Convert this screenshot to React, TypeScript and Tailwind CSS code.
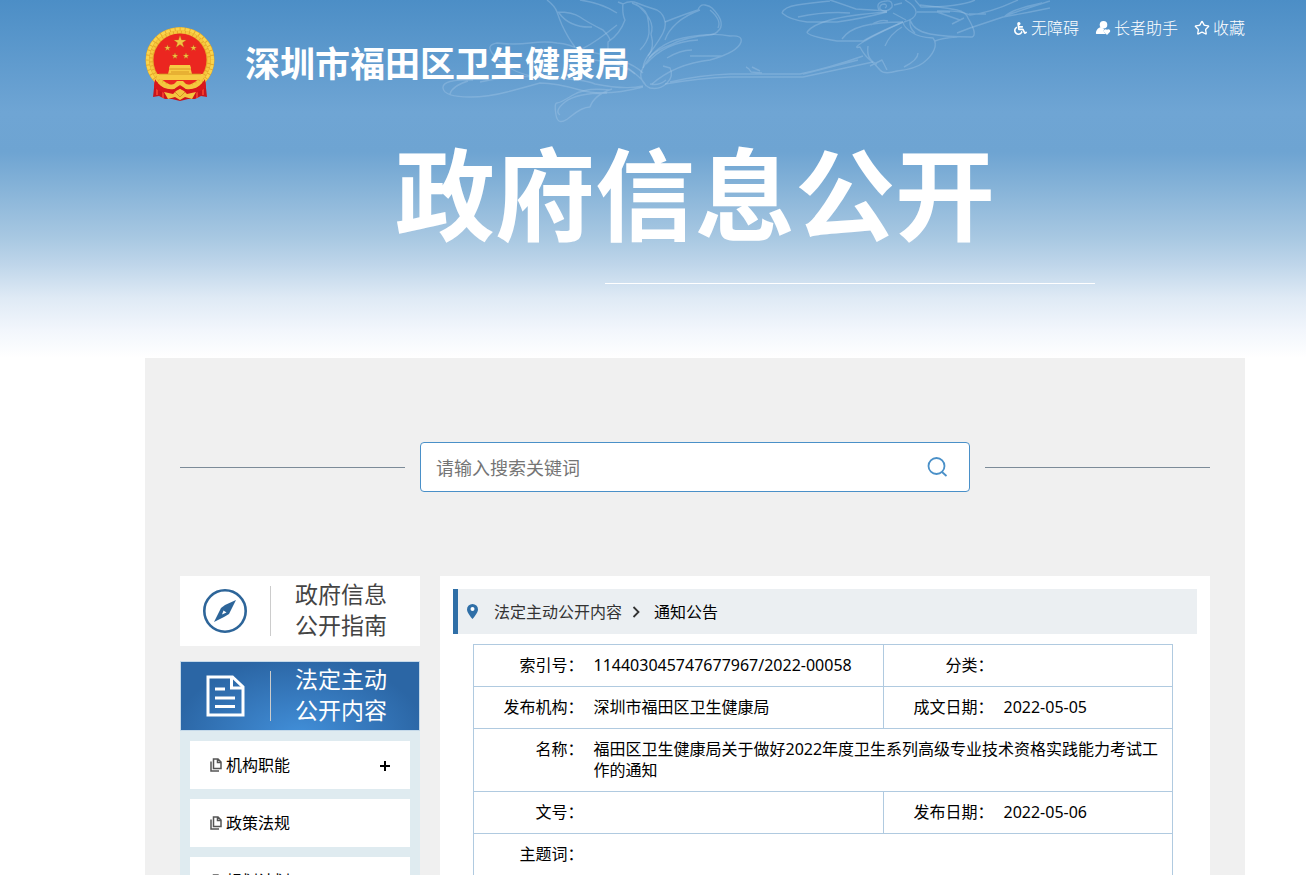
import type { ReactNode } from "react";
import { FaWheelchair } from "react-icons/fa";
import { Star } from "lucide-react";

function StarShape({ x, y, r }: { x: number; y: number; r: number }) {
  const points = Array.from({ length: 10 }, (_, i) => {
    const a = (Math.PI / 5) * i - Math.PI / 2;
    const d = i % 2 ? r * 0.4 : r;
    return `${x + d * Math.cos(a)},${y + d * Math.sin(a)}`;
  }).join(" ");
  return <polygon points={points} fill="#f3c443" stroke="#b5731a" strokeWidth="0.3" />;
}

function Emblem() {
  return (
    <svg className="h-[76px] w-[70px] shrink-0" viewBox="0 0 70 76" role="img" aria-label="国徽">
      <path d="M10 53 L8 71 L14 70 L20 73 L27 73 L35 75 L43 73 L50 73 L56 70 L62 71 L60 53 Z" fill="#c9151b" />
      <path d="M12 58v11M18 60v12M24 63v9M46 63v9M52 60v12M58 58v11" stroke="#ef3b2c" strokeWidth="2" />
      <ellipse cx="35" cy="34" rx="34.500" ry="33" fill="#e6aa2a" />
      <ellipse cx="35" cy="34" rx="32.500" ry="31" fill="none" stroke="#fbd44b" strokeWidth="3" strokeDasharray="4 1" />
      <ellipse cx="35" cy="34" rx="29" ry="28" fill="none" stroke="#f6c83f" strokeWidth="3" strokeDasharray="3 1" />
      <path d="M10 53c4 7 12 10 19 10l6-6 6 6c7 0 15-3 19-10l1 8c-6 6-14 7-19 7l-7-5-7 5c-5 0-13-1-19-7z" fill="#d8161b" />
      <circle cx="35" cy="34" r="26.500" fill="#eb2620" />
      <StarShape x={35} y={16} r={6.5} />
      <StarShape x={22.5} y={22} r={3.2} />
      <StarShape x={48.5} y={22} r={3.2} />
      <StarShape x={30} y={30} r={3.2} />
      <StarShape x={41} y={30} r={3.2} />
      <path d="M24 44v-2l1-3h20l1 3v2l1 4h11v5l-6 1H18l-6-1v-5h11z" fill="#f7cb43" />
      <path d="M24 43h22M14 48h42M26 46h18" stroke="#d18b1d" strokeWidth="0.8" />
      <path d="M14 54c4 4 10 6 15 4l3-3h6l3 3c5 2 11 0 15-4l1 3c-4 5-10 7-16 6l-6-4-6 4c-6 1-12-1-16-6z" fill="#f4c63f" />
      <path d="M19 66l9 2 3-3 4-2 4 2 3 3 9-2-4 7-7-2-5 3-5-3-7 2z" fill="#f4c63f" />
      <path d="M30 66l5 5 5-5" fill="none" stroke="#d18b1d" strokeWidth="0.8" />
    </svg>
  );
}

function FlowerLines() {
  return (
    <svg
      className="pointer-events-none absolute top-0 left-[430px] h-[130px] w-[620px]"
      viewBox="0 0 620 130"
      fill="none"
      stroke="#a9cbe8"
      strokeOpacity="0.36"
      strokeWidth="1.4"
      strokeLinejoin="round"
      aria-hidden="true"
    >
      <path d="M117 0Q125 6 127 12T132 25Q138 38 145 47M127 12Q143 12 150 17T173 30Q179 36 180 40M129 13Q140 28 162 27" />
      <path d="M150 0Q172 3 187 13M193 3Q192 14 195 20Q190 34 178 42V50M188 2L193 4Q200 0 207 3T227 10Q234 14 235 22Q236 27 233 33T220 53Q214 60 213 68" />
      <path d="M202 3Q215 8 217 15T219 33Q218 42 210 50M206 4Q226 20 221 34Q225 48 218 56M187 25Q166 42 152 49" />
      <path d="M235 22Q255 14 268 10Q270 4 275 5T282 8Q290 16 291 22T288 31Q286 34 280 35Q255 37 240 45Q226 50 219 58M270 10Q256 15 247 23T235 40M280 10Q292 20 288 28" />
      <path d="M213 68Q225 44 253 38T300 36Q313 35 311 42Q308 52 280 60Q245 64 222 84M216 64Q235 42 268 40M260 56H292M237 58Q250 50 262 50" />
      <path d="M62 53Q56 45 67 43Q84 45 100 43T127 43Q140 44 150 50Q198 58 213 73M62 53Q82 77 118 78T165 84Q195 90 213 86" />
      <path d="M43 80Q12 79 13 88T40 97Q58 97 77 92T110 83Q126 83 150 90T213 87M38 81Q22 86 20 94M50 82Q84 74 114 78" />
      <path d="M180 90Q156 87 143 95T127 103T126 115T140 117T160 107Q164 95 182 89M177 93Q146 93 135 102T130 115M164 60Q194 64 205 74" />
      <path d="M213 68Q209 74 212 80T220 88Q230 90 237 83T240 68L233 66M220 84Q229 86 236 80M198 68Q214 80 216 86" />
      <path d="M235 84Q270 78 300 77H373L443 62M240 82Q270 75 300 74H370Q396 69 433 56M373 74L428 60M316 67Q319 68 321 72L332 73M322 67L330 71M348 74H361" />
      <path d="M352 13Q354 7 367 5T400 1M352 13Q360 20 377 22H407Q430 19 457 12M400 0Q415 5 426 9L457 11M368 17Q396 11 420 13" />
      <path d="M377 32Q382 25 400 20T457 12M377 32Q377 36 407 41H433Q445 34 473 22M412 39Q418 30 433 26T473 22M441 25Q450 19 458 21" />
      <path d="M473 22Q444 35 433 42T430 47Q434 55 440 60T450 70T467 71Q485 69 493 63T504 50T503 38Q488 37 483 33Q474 28 473 22M438 46Q436 60 447 64M455 46Q460 34 472 27M488 53Q488 60 474 67M440 66L452 60L457 70" />
      <path d="M480 20Q484 31 500 34T542 37Q548 35 538 18Q536 12 527 10T490 5M480 20Q479 28 485 33M505 41Q512 38 527 37M487 12H520M507 12L530 20M522 24L534 18" />
      <path d="M449 10Q445 2 456 1Q463 0 462 7Q456 14 450 9Q449 4 455 4Q458 6 455 8M463 13L476 20M464 5L472 3M475 0Q487 7 486 13T474 22M485 0L491 7Q530 7 545 0" />
      <path d="M507 11Q530 10 540 15Q560 13 588 0M527 33L540 28L573 17L600 12L620 8M574 17Q582 9 612 3M577 15L620 1M539 14L556 14" />
    </svg>
  );
}

function HelperIcon() {
  return (
    <svg className="size-4" viewBox="0 0 16 16" fill="currentColor" aria-hidden="true">
      <circle cx="8.500" cy="4.800" r="3.800" />
      <path d="M6 7l3 2q-1 2 .5 3.500l1.500 1.500H1.500Q.5 14 1 12q1-4 5-5z" />
      <path d="M12 15L8.900 11.800a1.900 1.900 0 0 1 3.100-2 1.900 1.900 0 0 1 3.100 2z" />
    </svg>
  );
}

function CompassIcon() {
  return (
    <svg className="size-[46px]" viewBox="0 0 46 46" aria-hidden="true">
      <circle cx="23" cy="23" r="20.700" fill="none" stroke="#2d6599" strokeWidth="2.600" />
      <path d="M34 12L27 26l-5 3-10 5 7-14 4-3z" fill="#2d6599" />
      <path d="M20 26.500l1.500-4 3 2z" fill="#fff" />
    </svg>
  );
}

function DocumentIcon() {
  return (
    <svg className="size-[46px]" viewBox="0 0 46 46" fill="none" stroke="#fff" strokeWidth="3" aria-hidden="true">
      <path d="M6 4h24.500L41 14v28H6z" />
      <path d="M29.500 4v11H41" />
      <path d="M13 16h10M13 25h20M13 33.500h20" />
    </svg>
  );
}

function CopyIcon() {
  return (
    <svg className="h-[14px] w-3" viewBox="0 0 12 14" fill="none" stroke="#555" strokeWidth="1.500" aria-hidden="true">
      <path d="M3.500 1h4.500l3 3v6.500H3.500zM7.500 1v3.500H11M1 3.500V13h8" />
    </svg>
  );
}

function SideHeading({ icon, lines, active }: { icon: ReactNode; lines: string[]; active?: boolean }) {
  return (
    <a
      href="#"
      className={
        active
          ? "flex h-[70px] items-center border border-[#c5d9e9] bg-[radial-gradient(ellipse_at_50%_110%,#4290da_0%,#3679bd_40%,#2b66a5_75%)] pl-[21px] text-white"
          : "flex h-[70px] items-center bg-white pl-[22px] text-[#444]"
      }
    >
      {icon}
      <span className="ml-[22px] h-[50px] w-px bg-[#ccc]" />
      <span className="ml-6 pb-[2px] text-[23px] leading-[31px]">
        {lines.map((l) => (
          <span key={l} className="block">{l}</span>
        ))}
      </span>
    </a>
  );
}

const menu = [
  { label: "机构职能", expandable: true },
  { label: "政策法规", expandable: false },
  { label: "规划计划", expandable: false },
];

const head = "border border-r-0 border-[#b0cae0] py-[10px] text-right align-top leading-[21px] font-normal";
const data = "border border-l-0 border-[#b0cae0] py-[10px] pr-2 pl-[10px] align-top leading-[21px]";

export default function App() {
  return (
    <div className="min-h-screen bg-white font-['Noto_Sans','Noto_Sans_CJK_SC',sans-serif] text-base text-black">
      <header className="relative h-[358px] overflow-hidden bg-[linear-gradient(180deg,#4c8ec6_0px,#6fa5d4_112px,#6ea4d2_152px,#86b3d8_188px,#a8c8e2_238px,#bfd6ea_265px,#dfeaf5_298px,#f2f6fc_330px,#fff_358px)] pr-[61px] pl-[145px] text-white">
        <FlowerLines />
        <div className="relative flex justify-between">
          <div className="flex items-start pt-[26px]">
            <Emblem />
            <h1 className="ml-[30px] pt-3 text-[35px] leading-[52px] font-bold">深圳市福田区卫生健康局</h1>
          </div>
          <nav className="flex items-start gap-4 pt-4 font-light">
            <a href="#" className="flex items-center gap-1 leading-6"><FaWheelchair className="size-[13px]" />无障碍</a>
            <a href="#" className="flex items-center gap-[3px] leading-6"><HelperIcon />长者助手</a>
            <a href="#" className="flex items-center gap-[3px] leading-6"><Star className="size-4" />收藏</a>
          </nav>
        </div>
        <p className="relative mt-6 text-center text-[100px] leading-[136px] font-bold">政府信息公开</p>
        <div className="mr-[150px] ml-[460px] mt-[21px] h-px bg-white" />
      </header>

      <main className="mr-[61px] ml-[145px] bg-[#f0f0f0] px-[35px] pb-10">
        <form className="flex items-center gap-[15px] pt-[84px]" onSubmit={(e) => e.preventDefault()}>
          <span className="h-px flex-1 bg-[#7c8b98]" />
          <div className="flex h-[50px] w-[550px] items-center rounded border border-[#4a90c8] bg-white pr-5 pl-[15px]">
            <input
              aria-label="搜索关键词"
              placeholder="请输入搜索关键词"
              className="min-w-0 flex-1 bg-transparent pt-[2px] text-lg outline-none placeholder:text-[#757575]"
            />
            <button type="submit" aria-label="搜索" className="text-[#4a90c8]">
              <svg className="size-6" viewBox="0 0 24 24" fill="none" stroke="currentColor" strokeWidth="1.800" aria-hidden="true">
                <circle cx="11.500" cy="11" r="8" />
                <path d="M17 17l4.500 4" />
              </svg>
            </button>
          </div>
          <span className="h-px flex-1 bg-[#7c8b98]" />
        </form>

        <div className="mt-[84px] flex items-start gap-5">
          <aside className="w-60 shrink-0">
            <SideHeading icon={<CompassIcon />} lines={["政府信息", "公开指南"]} />
            <div className="mt-[15px] bg-[#dfebf0]">
              <SideHeading active icon={<DocumentIcon />} lines={["法定主动", "公开内容"]} />
              <ul className="space-y-[10px] p-[10px]">
                {menu.map((m) => (
                  <li key={m.label}>
                    <a href="#" className="flex h-12 items-center bg-white px-5">
                      <CopyIcon />
                      <span className="ml-1 flex-1">{m.label}</span>
                      {m.expandable && (
                        <svg className="h-3 w-[10px]" viewBox="0 0 10 12" stroke="#000" strokeWidth="2" aria-hidden="true">
                          <path d="M0 7h10M5 2v10" />
                        </svg>
                      )}
                    </a>
                  </li>
                ))}
              </ul>
            </div>
          </aside>

          <section className="min-w-0 flex-1 bg-white px-[13px] pt-[13px] pb-10">
            <nav className="flex h-[45px] items-center border-l-[5px] border-[#2f6fa7] bg-[#ebeff2] pl-[9px]">
              <svg className="h-[15px] w-[11px]" viewBox="0 0 11 15" aria-hidden="true">
                <path d="M5.500 0A5.500 5.500 0 0 0 0 5.500C0 9 5.500 15 5.500 15S11 9 11 5.500A5.500 5.500 0 0 0 5.500 0z" fill="#2f6fa7" />
                <circle cx="5.500" cy="5" r="2" fill="#fff" />
              </svg>
              <a href="#" className="ml-4 text-[#333]">法定主动公开内容</a>
              <svg className="ml-[10px] h-3 w-2" viewBox="0 0 8 12" fill="none" stroke="#333" strokeWidth="1.800" aria-hidden="true">
                <path d="M1.500 1l5 5-5 5" />
              </svg>
              <a href="#" className="ml-[14px]">通知公告</a>
            </nav>
            <div className="pt-[10px] pr-6 pl-5">
              <table className="w-full table-fixed border-collapse">
                <colgroup>
                  <col className="w-[110px]" />
                  <col className="w-[300px]" />
                  <col className="w-[110px]" />
                  <col />
                </colgroup>
                <tbody>
                  <tr>
                    <th className={head}>索引号：</th>
                    <td className={data}>114403045747677967/2022-00058</td>
                    <th className={head}>分类：</th>
                    <td className={data}></td>
                  </tr>
                  <tr>
                    <th className={head}>发布机构：</th>
                    <td className={data}>深圳市福田区卫生健康局</td>
                    <th className={head}>成文日期：</th>
                    <td className={data}>2022-05-05</td>
                  </tr>
                  <tr>
                    <th className={head}>名称：</th>
                    <td className={data} colSpan={3}>福田区卫生健康局关于做好2022年度卫生系列高级专业技术资格实践能力考试工作的通知</td>
                  </tr>
                  <tr>
                    <th className={head}>文号：</th>
                    <td className={data}></td>
                    <th className={head}>发布日期：</th>
                    <td className={data}>2022-05-06</td>
                  </tr>
                  <tr>
                    <th className={head}>主题词：</th>
                    <td className={data} colSpan={3}></td>
                  </tr>
                </tbody>
              </table>
            </div>
          </section>
        </div>
      </main>
    </div>
  );
}
